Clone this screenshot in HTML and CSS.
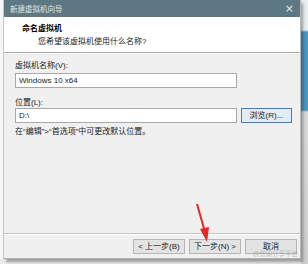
FILE: index.html
```html
<!DOCTYPE html>
<html>
<head>
<meta charset="utf-8">
<link rel="stylesheet" href="styles.css">
</head>
<body>
<div class="page">
  <div class="left-strip"></div>
  <div class="dialog">
    <div class="titlebar">
      <span class="title">新建虚拟机向导</span>
      <span class="close">×</span>
    </div>
    <div class="header">
      <div class="h-title">命名虚拟机</div>
      <div class="h-sub">您希望该虚拟机使用什么名称?</div>
    </div>
    <div class="body">
      <div class="label">虚拟机名称(V):</div>
      <div class="row">
        <div class="input">Windows 10 x64</div>
      </div>
      <div class="label loc">位置(L):</div>
      <div class="row">
        <div class="input">D:\</div>
        <div class="btn browse">浏览(R)...</div>
      </div>
      <div class="hint">在“编辑”&gt;“首选项”中可更改默认位置。</div>
    </div>
    <div class="footer">
      <div class="btn fbtn">&lt; 上一步(B)</div>
      <div class="btn fbtn">下一步(N) &gt;</div>
      <div class="btn fbtn">取消</div>
      <span class="watermark">@资源分享平台</span>
    </div>
  </div>
  <div class="right-strip"></div>
  <svg class="arrow" width="30" height="45" viewBox="0 0 30 45">
    <line x1="3" y1="2" x2="11" y2="30" stroke="#e8262a" stroke-width="2"/>
    <polygon points="6,27 15,25 13,40" fill="#e8262a"/>
  </svg>
</div>
</body>
</html>
```

FILE: styles.css
```css
* { box-sizing: border-box; }
html, body { margin: 0; padding: 0; }
body {
  width: 308px;
  height: 264px;
  overflow: hidden;
  background: #ececec;
  font-family: "Liberation Sans", "Noto Sans CJK SC", sans-serif;
  font-size: 8px;
  color: #1a1a1a;
}
.page {
  position: relative;
  display: flex;
  width: 308px;
  height: 264px;
}
.left-strip {
  width: 4px;
  height: 259px;
  background: #f6f6f6;
  border-right: 1px solid #c8c8c8;
}
.dialog {
  width: 297px;
  height: 259px;
  display: flex;
  flex-direction: column;
  background: #f0f0f0;
  border-right: 1px solid #b9b9b9;
  border-bottom: 1px solid #b0b0b0;
  box-shadow: 2px 3px 3px rgba(0,0,0,0.35);
  position: relative;
}
.right-strip {
  flex: 1;
  height: 264px;
  background: linear-gradient(#e9eef0 0, #e9eef0 30px, #4a97bd 32px, #4a97bd 110px, #d9d9d9 112px, #cfcfcf 100%);
}
.titlebar {
  height: 17px;
  background: #5d7883;
  display: flex;
  align-items: center;
  justify-content: space-between;
  padding: 0 6px 0 6px;
}
.title {
  color: #dfe8ec;
  font-size: 7.5px;
}
.close {
  color: #e6eef0;
  font-size: 11px;
  line-height: 1;
  font-family: "DejaVu Sans", sans-serif;
}
.header {
  height: 36px;
  background: #ffffff;
  border-bottom: 1px solid #a9a9a9;
  box-shadow: 0 1px 0 #ffffff;
  padding: 5px 0 0 18px;
}
.h-title {
  font-weight: bold;
  font-size: 8px;
  color: #000;
}
.h-sub {
  margin-top: 2px;
  padding-left: 16px;
  font-size: 8px;
  color: #222;
}
.body {
  flex: 1;
  padding: 8px 0 0 11px;
}
.label {
  height: 10px;
  line-height: 10px;
  margin-bottom: 2px;
  color: #222;
}
.label.loc { margin-top: 10px; margin-bottom: 0; }
.row {
  display: flex;
  gap: 4px;
  align-items: center;
}
.input {
  width: 222px;
  height: 15px;
  background: #fff;
  border: 1px solid #a9a9a9;
  line-height: 13px;
  padding-left: 3px;
  color: #222;
}
.btn {
  height: 15px;
  line-height: 13px;
  text-align: center;
  background: #e3e3e3;
  border: 1px solid #b5b5b5;
  color: #222;
}
.browse {
  width: 51px;
  border: 1px solid #3c7fc8;
  background: #e2ecf6;
}
.hint {
  margin-top: 4px;
  height: 10px;
  line-height: 10px;
  color: #222;
}
.footer {
  height: 25px;
  border-top: 1px solid #c4c4c4;
  box-shadow: inset 0 1px 0 #ffffff;
  display: flex;
  align-items: center;
  justify-content: flex-end;
  gap: 4px;
  padding-right: 3px;
  position: relative;
}
.fbtn {
  width: 52px;
}
.watermark {
  position: absolute;
  right: 2px;
  top: 14px;
  font-size: 6.5px;
  color: rgba(140,140,140,0.5);
  white-space: nowrap;
}
.arrow {
  position: absolute;
  left: 194px;
  top: 202px;
}
```
